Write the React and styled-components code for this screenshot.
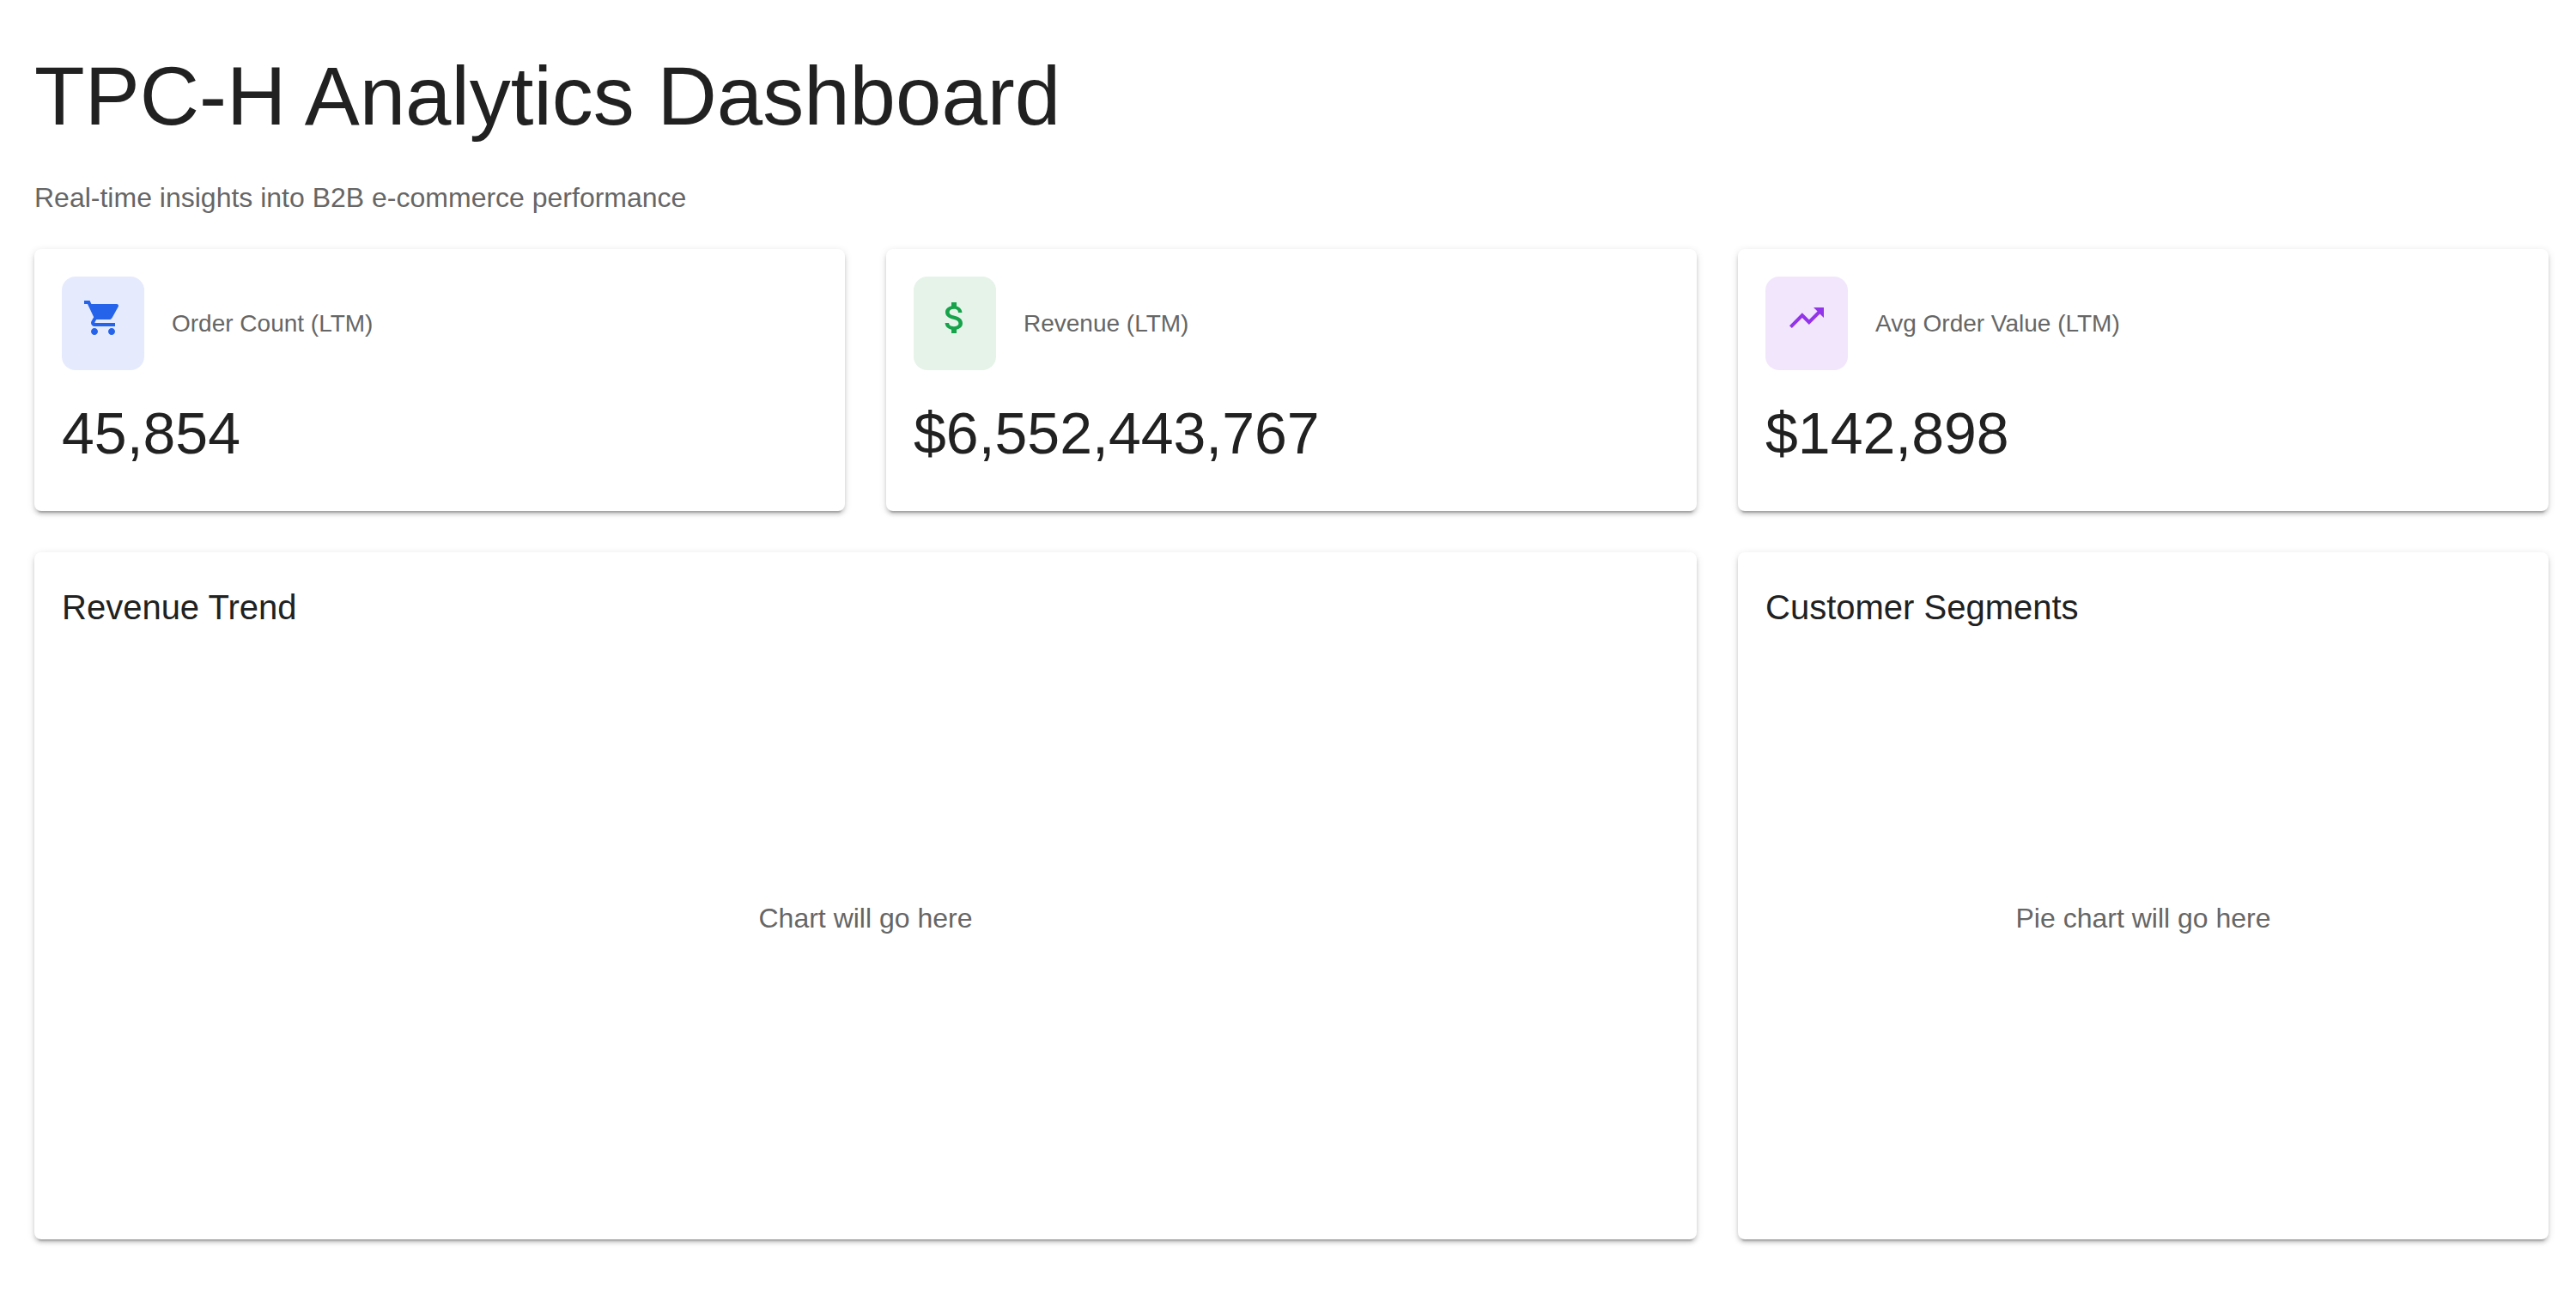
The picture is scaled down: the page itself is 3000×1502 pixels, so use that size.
import React from "react";
import styled, { createGlobalStyle } from "styled-components";
import { MdShoppingCart, MdAttachMoney, MdTrendingUp } from "react-icons/md";

const GlobalStyle = createGlobalStyle`
  *, *::before, *::after { box-sizing: border-box; }
  body {
    margin: 0;
    background: #ffffff;
    color: #212121;
    font-family: Helvetica, Arial, "Liberation Sans", sans-serif;
  }
  h1, h2, p { margin: 0; font-weight: 400; }
`;

const Page = styled.main`
  padding: 56px 32px 56px 40px;
`;

const Header = styled.header`
  display: flex;
  flex-direction: column;
  gap: 38px;
  margin-bottom: 36px;
`;

const Title = styled.h1`
  font-size: 96px;
  line-height: 112px;
`;

const Muted = styled.p`
  color: #666666;
  font-size: 32px;
  line-height: 48px;
`;

const Grid = styled.div`
  display: grid;
  grid-template-columns: repeat(3, minmax(0, 1fr));
  gap: 48px;
`;

const Card = styled.section`
  grid-column: span ${({ $span = 1 }) => $span};
  padding: 32px 32px 48px;
  border-radius: 8px;
  background: #ffffff;
  box-shadow:
    0 6px 2px -4px rgba(0, 0, 0, 0.2),
    0 4px 4px 0 rgba(0, 0, 0, 0.14),
    0 2px 10px 0 rgba(0, 0, 0, 0.12);
`;

const ChartCard = styled(Card)`
  min-height: 800px;
`;

const MetricHeader = styled.div`
  display: flex;
  align-items: center;
  gap: 32px;
  margin-bottom: 30px;
`;

const IconBadge = styled.div`
  display: flex;
  padding: 24px 24px 37px;
  border-radius: 16px;
  color: ${({ $color }) => $color};
  background: ${({ $background }) => $background};
  font-size: 48px;
`;

const MetricLabel = styled.h2`
  color: #666666;
  font-size: 28px;
  line-height: 40px;
`;

const MetricValue = styled.p`
  font-size: 68px;
  line-height: 86px;
`;

const CardTitle = styled.h2`
  margin-bottom: 30px;
  font-size: 40px;
  line-height: 64px;
`;

const ChartArea = styled.div`
  display: flex;
  align-items: center;
  justify-content: center;
  height: 600px;
`;

const metrics = [
  { label: "Order Count (LTM)", value: "45,854", Icon: MdShoppingCart, color: "#2563eb", background: "#e5eafd" },
  { label: "Revenue (LTM)", value: "$6,552,443,767", Icon: MdAttachMoney, color: "#16a34a", background: "#e6f3e9" },
  { label: "Avg Order Value (LTM)", value: "$142,898", Icon: MdTrendingUp, color: "#9333ea", background: "#f2e6fc" },
];

const charts = [
  { title: "Revenue Trend", placeholder: "Chart will go here", span: 2 },
  { title: "Customer Segments", placeholder: "Pie chart will go here", span: 1 },
];

export default function App() {
  return (
    <>
      <GlobalStyle />
      <Page>
        <Header>
          <Title>TPC-H Analytics Dashboard</Title>
          <Muted>Real-time insights into B2B e-commerce performance</Muted>
        </Header>
        <Grid>
          {metrics.map(({ label, value, Icon, color, background }) => (
            <Card key={label}>
              <MetricHeader>
                <IconBadge $color={color} $background={background}>
                  <Icon aria-hidden="true" />
                </IconBadge>
                <MetricLabel>{label}</MetricLabel>
              </MetricHeader>
              <MetricValue>{value}</MetricValue>
            </Card>
          ))}
          {charts.map(({ title, placeholder, span }) => (
            <ChartCard key={title} $span={span}>
              <CardTitle>{title}</CardTitle>
              <ChartArea>
                <Muted>{placeholder}</Muted>
              </ChartArea>
            </ChartCard>
          ))}
        </Grid>
      </Page>
    </>
  );
}
